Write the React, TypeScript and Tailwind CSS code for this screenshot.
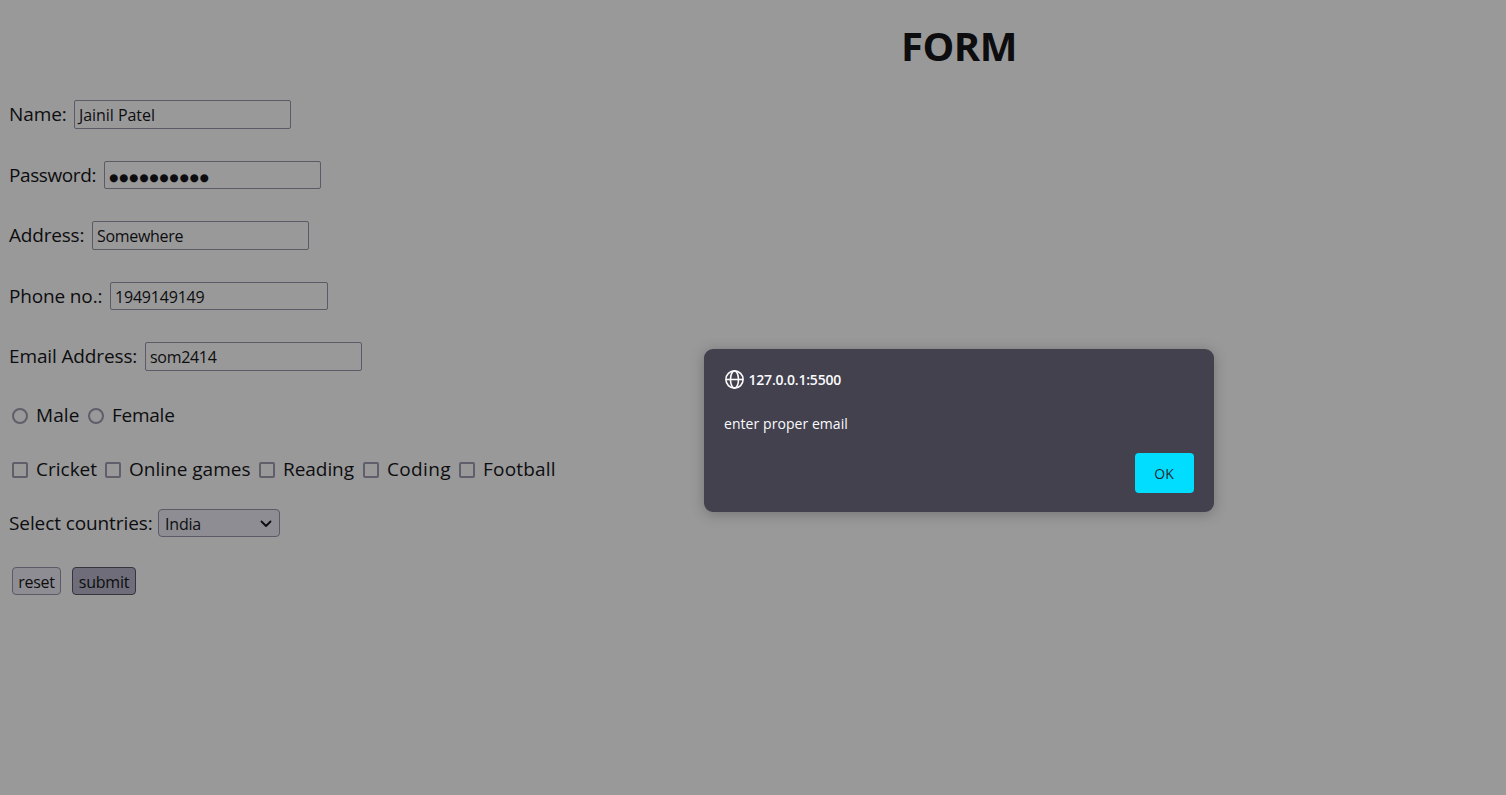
import type { ReactNode } from "react";

function Field({ label, labelClass, value, rowClass, valueClass = "tracking-[-0.2px]" }: {
  label: string; labelClass: string; value: string; rowClass: string; valueClass?: string;
}) {
  return (
    <div className={`flex ${rowClass}`}>
      <span className={`shrink-0 leading-[28px] ${labelClass}`}>{label}</span>
      <div className="h-full flex-1 rounded-[2px] border border-[#5b5a66] pl-1 text-[16px] leading-[28px]">
        <span className={valueClass}>{value}</span>
      </div>
    </div>
  );
}

function Choice({ children, className, round = false }: { children: ReactNode; className: string; round?: boolean }) {
  return (
    <label className={`flex shrink-0 items-center ${className}`}>
      <span className={`mt-px mr-2 size-4 shrink-0 border-2 border-[#5f5e6a] ${round ? "rounded-full" : "rounded-[2px]"}`} />
      <span className="leading-[28px]">{children}</span>
    </label>
  );
}

export default function App() {
  return (
    <main className="relative h-[795px] w-[1506px] overflow-hidden bg-[#99999a] font-['Open_Sans',sans-serif] text-[19px] whitespace-nowrap text-[#0d0d0f]">
      <h1 className="ml-[901px] pt-[19px] text-[40px] leading-[54px] font-bold tracking-[-0.5px]">FORM</h1>
      <form className="pl-[9px]">
        <Field label="Name:" labelClass="w-[65px] tracking-[-0.1px]" value="Jainil Patel" valueClass="tracking-[-0.05px]" rowClass="mt-[27px] h-[29px] w-[282px]" />
        <Field label="Password:" labelClass="w-[95px] tracking-[-0.4px]" value="●●●●●●●●●●" valueClass="block leading-[30px] font-['DejaVu_Sans'] text-[10.5px] tracking-[0.9px]" rowClass="mt-8 h-[28px] w-[312px]" />
        <Field label="Address:" labelClass="w-[83px] tracking-[-0.2px]" value="Somewhere" valueClass="tracking-[-0.3px]" rowClass="mt-8 h-[29px] w-[300px]" />
        <Field label="Phone no.:" labelClass="w-[101px] tracking-[-0.15px]" value="1949149149" rowClass="mt-8 h-[28px] w-[319px]" />
        <Field label="Email Address:" labelClass="w-[136px] tracking-[-0.13px]" value="som2414" valueClass="tracking-[-0.3px]" rowClass="mt-8 h-[29px] w-[353px]" />

        <div className="mt-[30px] flex h-[28px] pl-[3px]">
          <Choice round className="w-[76px] tracking-[0.1px]">Male</Choice>
          <Choice round className="w-[90px] tracking-[-0.25px]">Female</Choice>
        </div>
        <div className="mt-[26px] flex h-[28px] pl-[3px]">
          <Choice className="w-[93px] tracking-[0px]">Cricket</Choice>
          <Choice className="w-[154px] tracking-[0px]">Online games</Choice>
          <Choice className="w-[104px] tracking-[-0.05px]">Reading</Choice>
          <Choice className="w-[96px] tracking-[0.35px]">Coding</Choice>
          <Choice className="w-[100px] tracking-[0.2px]">Football</Choice>
        </div>
        <div className="mt-[26px] flex h-[28px]">
          <span className="w-[149px] shrink-0 leading-[28px] tracking-[-0.1px]">Select countries:</span>
          <div className="flex w-[122px] items-center justify-between rounded-[4px] border border-[#5b5a66] bg-[#8d8d93] pr-[7px] pl-[6px] text-[16px]">
            <span className="pt-0.5 leading-[26px] tracking-[-0.2px]">India</span>
            <svg className="mt-px" width="12" height="8" viewBox="0 0 12 8" fill="none" stroke="#0d0d0f" strokeWidth="1.800" strokeLinecap="round" strokeLinejoin="round">
              <path d="M1.5 1.5 6 6l4.500-4.500" />
            </svg>
          </div>
        </div>
        <div className="mt-[30px] flex h-[28px] gap-[11px] pl-[3px] text-[16px]">
          <button type="button" className="w-[49px] rounded-[4px] border border-[#5b5a66] bg-[#8d8d93] pt-px leading-[26px] tracking-[-0.3px]">reset</button>
          <button type="button" className="w-[64px] rounded-[4px] border border-[#35343f] bg-[#6e6d79] pt-px leading-[26px] tracking-[-0.2px]">submit</button>
        </div>
      </form>

      <section role="dialog" className="absolute top-[349px] left-[704px] flex h-[163px] w-[510px] flex-col rounded-[9px] bg-[#42414d] px-5 pt-5 pb-[19px] text-[14px] text-[#fbfbfe] shadow-[0_2px_14px_rgba(0,0,0,0.25)]">
        <div className="flex h-[21px] items-center">
          <svg className="ml-px shrink-0" width="19" height="19" viewBox="0 0 19 19" fill="none" stroke="#fbfbfe" strokeWidth="1.600">
            <circle cx="9.500" cy="9.500" r="8.600" />
            <ellipse cx="9.500" cy="9.500" rx="4" ry="8.600" />
            <path d="M1 9.500h17" />
          </svg>
          <span className="ml-[4.5px] font-semibold tracking-[-0.2px]">127.0.0.1:5500</span>
        </div>
        <p className="mt-6 leading-[20px] tracking-[0.06px]">enter proper email</p>
        <button type="button" className="mt-auto h-[40px] w-[59px] self-end rounded-[4px] bg-[#00ddff] pr-px text-[#2b2a33]">OK</button>
      </section>
    </main>
  );
}
